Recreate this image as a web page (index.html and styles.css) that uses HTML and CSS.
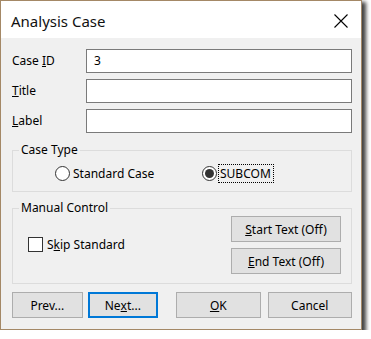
FILE: index.html
```html
<!DOCTYPE html>
<html>
  <head>
    <meta charset="UTF-8" />
    <title>Analysis Case</title>
    <link rel="stylesheet" href="styles.css">
  </head>

  <body>
    <div class="dialog">
      <div class="titlebar">
        <span class="title">Analysis Case</span>
        <svg class="close" width="14" height="14" viewBox="0 0 14 14">
          <path d="M0.5 0.5 L13.5 13.5 M13.5 0.5 L0.5 13.5" stroke="#000" stroke-width="1.1" fill="none" />
        </svg>
      </div>

      <div class="content">
        <div class="fields">
          <label>Case <u>I</u>D</label>
          <div class="input">3</div>
          <label><u>T</u>itle</label>
          <div class="input"></div>
          <label><u>L</u>abel</label>
          <div class="input"></div>
        </div>

        <fieldset class="group case-type">
          <legend>Case Type</legend>
          <div class="radios">
            <span class="radio"><span class="mark"></span><span class="text">Standard Case</span></span>
            <span class="radio checked"><span class="mark"></span><span class="text focus">SUBCOM</span></span>
          </div>
        </fieldset>

        <fieldset class="group manual">
          <legend>Manual Control</legend>
          <div class="manual-body">
            <div class="check"><span class="box"></span><span>S<u>k</u>ip Standard</span></div>
            <div class="stack">
              <div class="btn"><u>S</u>tart Text (Off)</div>
              <div class="btn"><u>E</u>nd Text (Off)</div>
            </div>
          </div>
        </fieldset>

        <div class="actions">
          <div class="btn nav">Prev...</div>
          <div class="btn nav default">Ne<u>x</u>t...</div>
          <div class="btn wide ok"><u>O</u>K</div>
          <div class="btn wide">Cancel</div>
        </div>
      </div>
    </div>
  </body>
</html>
```

FILE: styles.css
```css
html,
body {
  margin: 0;
  padding: 0;
  background: #fff;
}

body {
  font-family: 'Segoe UI', 'Noto Sans', sans-serif;
  font-size: 12px;
  color: #000;
}

.dialog {
  box-sizing: border-box;
  width: 362px;
  height: 330px;
  border: 1px solid #a48866;
  background: #f0f0f0;
  box-shadow: 3px 3px 4px 1px rgba(0, 0, 0, 0.75);
  display: flex;
  flex-direction: column;
}

.titlebar {
  height: 37px;
  background: #fff;
  display: flex;
  align-items: center;
  justify-content: space-between;
  padding: 0 13px 0 10px;
}

.titlebar .title {
  font-size: 15px;
  line-height: 20px;
  margin-top: 2px;
  color: #111;
}

.titlebar .close {
  display: block;
  margin-top: 2px;
}

.content {
  flex: 1;
  display: flex;
  flex-direction: column;
  padding: 11px 9px 0 11px;
}

.fields {
  display: grid;
  grid-template-columns: 74px 1fr;
  row-gap: 6px;
  align-items: center;
}

.fields label {
  margin-top: -1px;
}

.input {
  box-sizing: border-box;
  height: 24px;
  border: 1px solid #7a7a7a;
  background: #fff;
  padding: 0 7px;
  line-height: 22px;
}

.group {
  margin: 0;
  padding: 0;
  border: 1px solid #dcdcdc;
  min-width: 0;
  box-sizing: border-box;
}

.group legend {
  margin-left: 6px;
  padding: 0 2px;
  line-height: 16px;
}

.case-type {
  margin-top: 9px;
  height: 50px;
}

.radios {
  display: flex;
  height: 18px;
  margin-top: 6px;
  align-items: center;
}

.radio {
  display: flex;
  align-items: center;
}

.radio:first-child {
  margin-left: 42px;
  width: 147px;
}

.radio .mark {
  box-sizing: border-box;
  width: 15px;
  height: 15px;
  border: 1px solid #333;
  border-radius: 50%;
  background: #fff;
  margin-right: 3px;
  display: flex;
  align-items: center;
  justify-content: center;
}

.radio.checked .mark::after {
  content: '';
  width: 9px;
  height: 9px;
  border-radius: 50%;
  background: #333;
}

.radio .focus {
  outline: 1px dotted #000;
  outline-offset: 0;
  padding: 0 2px 0 1px;
  line-height: 17px;
  margin-left: -1px;
}

.manual {
  margin-top: 8px;
  height: 84px;
}

.manual-body {
  display: flex;
  align-items: center;
  justify-content: space-between;
  padding: 0 10px 0 15px;
  height: 58px;
}

.check {
  display: flex;
  align-items: center;
  margin-top: -2px;
}

.check .box {
  box-sizing: border-box;
  width: 15px;
  height: 15px;
  border: 1px solid #333;
  background: #fff;
  margin-right: 4px;
}

.stack {
  display: flex;
  flex-direction: column;
  gap: 6px;
}

.btn {
  box-sizing: border-box;
  height: 26px;
  border: 1px solid #adadad;
  background: #e1e1e1;
  display: flex;
  align-items: center;
  justify-content: center;
}

.stack .btn {
  width: 110px;
}

.actions {
  display: flex;
  margin-top: 8px;
  gap: 5px;
}

.btn.nav {
  width: 71px;
}

.btn.default {
  border: 2px solid #0078d7;
}

.btn.wide {
  width: 85px;
}

.btn.ok {
  margin-left: 13px;
  margin-right: 2px;
}
```
